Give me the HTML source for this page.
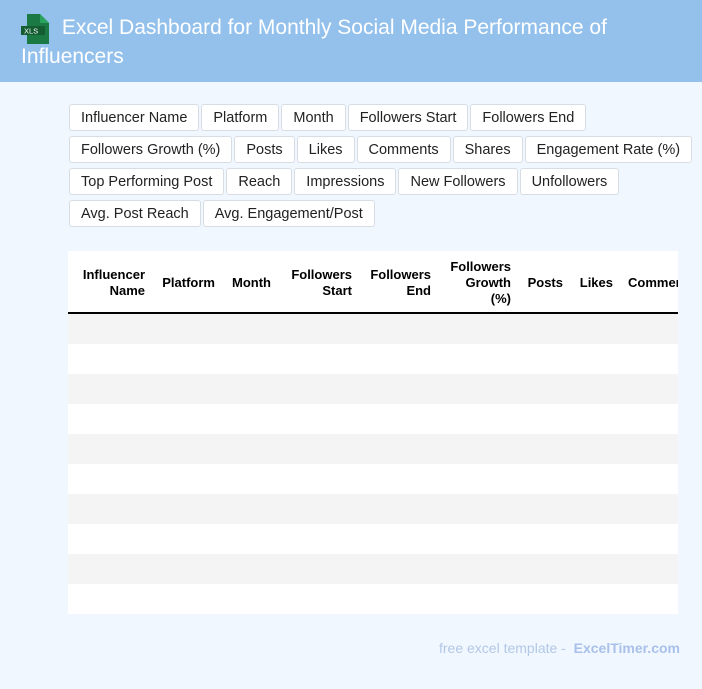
<html><head><style>
body{margin:0;width:702px;height:689px;background:#f0f7ff;font-family:"Liberation Sans",sans-serif;position:relative;overflow:hidden}
.hd{position:absolute;left:0;top:0;width:702px;height:82px;background:#93c1ec}
.tt{position:absolute;left:21px;top:13px;width:660px;color:#fff;font-size:21px;line-height:29px}
.tags{position:absolute;left:69px;top:104px;width:633px;display:flex;flex-wrap:wrap;gap:5px 2px}
.tag{height:27px;line-height:27px;padding:0 11px;background:#fff;border:1px solid #d8dde3;border-radius:3px;font-size:14.5px;color:#222;box-sizing:border-box;white-space:nowrap}
.tbl{position:absolute;left:68px;top:251px;width:610px;height:363px;background:#fff;overflow:hidden}
.th{position:absolute;font-weight:bold;font-size:13px;line-height:16px;text-align:right;color:#000}
.r{position:absolute;left:0;width:610px;height:30px}
</style></head><body>
<div class="hd"></div>
<svg style="position:absolute;left:21px;top:14px" width="30" height="30" viewBox="0 0 30 30"><path d="M6 0h13l9 9v21H6z" fill="#1b7a43"/><path d="M19 0l9 9h-9z" fill="#2aa35c"/><rect x="0" y="12" width="24" height="9" fill="#145c32"/><text x="3" y="19.5" font-size="7.5" fill="#fff" font-family="Liberation Sans">XLS</text></svg>
<div class="tt">&nbsp;&nbsp;&nbsp;&nbsp;&nbsp;&nbsp;&nbsp;Excel Dashboard for Monthly Social Media Performance of Influencers</div>
<div class="tags">
<div class="tag">Influencer Name</div><div class="tag">Platform</div><div class="tag">Month</div><div class="tag">Followers Start</div><div class="tag">Followers End</div>
<div class="tag">Followers Growth (%)</div><div class="tag">Posts</div><div class="tag">Likes</div><div class="tag">Comments</div><div class="tag">Shares</div><div class="tag">Engagement Rate (%)</div>
<div class="tag">Top Performing Post</div><div class="tag">Reach</div><div class="tag">Impressions</div><div class="tag">New Followers</div><div class="tag">Unfollowers</div>
<div class="tag">Avg. Post Reach</div><div class="tag">Avg. Engagement/Post</div>
</div>
<div class="tbl">
<div class="th" style="right:533px;top:16px">Influencer<br>Name</div>
<div class="th" style="right:463px;top:24px">Platform</div>
<div class="th" style="right:407px;top:24px">Month</div>
<div class="th" style="right:326px;top:16px">Followers<br>Start</div>
<div class="th" style="right:247px;top:16px">Followers<br>End</div>
<div class="th" style="right:167px;top:8px">Followers<br>Growth<br>(%)</div>
<div class="th" style="right:115px;top:24px">Posts</div>
<div class="th" style="right:65px;top:24px">Likes</div>
<div class="th" style="left:560px;top:24px;text-align:left;white-space:nowrap">Comments</div>
<div style="position:absolute;left:0;top:61px;width:610px;height:2px;background:#000"></div>
<div class="r" style="top:63px;background:#f4f4f4"></div>
<div class="r" style="top:123px;background:#f4f4f4"></div>
<div class="r" style="top:183px;background:#f4f4f4"></div>
<div class="r" style="top:243px;background:#f4f4f4"></div>
<div class="r" style="top:303px;background:#f4f4f4"></div>
</div>
<div style="position:absolute;right:22px;top:640px;font-size:14px;color:#b3c7e6">free excel template - &nbsp;<b style="color:#a9c1ea">ExcelTimer.com</b></div>
</body></html>
